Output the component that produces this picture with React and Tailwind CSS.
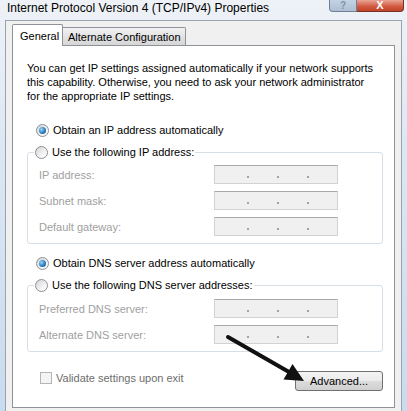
import React from "react";

const Radio = ({ checked }) => (
  <span className="inline-flex w-[13px] h-[13px] shrink-0 items-center justify-center rounded-full border border-[#8c8f94] bg-[linear-gradient(135deg,#d4d4d4,#f7f7f7_70%,#ffffff)]">
    {checked && (
      <span className="w-[7px] h-[7px] rounded-full bg-[radial-gradient(circle_at_35%_35%,#9ad6f7,#2a7fc0_55%,#0f3e70)]" />
    )}
  </span>
);

const IpBox = () => (
  <div className="w-[124px] h-[19px] border border-[#d2d2d2] border-t-[#a8a8a8] bg-[#f0f0f0] flex items-end pb-[5px] pl-[32px] gap-[28px]">
    <span className="w-[2px] h-[2px] bg-[#a3a3a3]" />
    <span className="w-[2px] h-[2px] bg-[#a3a3a3]" />
    <span className="w-[2px] h-[2px] bg-[#a3a3a3]" />
  </div>
);

const Field = ({ label }) => (
  <div className="flex items-center h-[19px]">
    <span className="w-[175px] text-[#a0a0a0]">{label}</span>
    <IpBox />
  </div>
);

const Group = ({ legend, children, pt }) => (
  <fieldset className={`mt-[6px] rounded-[3px] border border-[#d5dfe5] pl-[11px] pb-[7px] ${pt}`}>
    <legend className="-ml-[5px] px-[1px] flex items-center gap-[4px] h-[16px] text-black">
      <Radio />
      <span>{legend}</span>
    </legend>
    <div className="flex flex-col gap-[7px]">{children}</div>
  </fieldset>
);

export default function App() {
  return (
    <div className="relative w-[407px] h-[411px] overflow-hidden whitespace-nowrap bg-[linear-gradient(180deg,#eef2f7,#dbe6f3_40%,#c9dbef)] font-['Liberation_Sans',Arial,sans-serif] text-[11px] leading-[14px] text-black">
      {/* Title bar */}
      <div className="h-[20px] flex items-start justify-between">
        <span className="pl-[7px] pt-[1px] text-[12px] leading-[15px] text-black">
          Internet Protocol Version 4 (TCP/IPv4) Properties
        </span>
        <div className="flex mr-[3px]">
          <div className="w-[28px] h-[12px] border border-t-0 border-[#6f7f95] rounded-bl-[4px] bg-[linear-gradient(180deg,#c4d3e4,#aebfd4)] flex items-center justify-center">
            <span className="text-[10px] leading-[11px] font-bold text-[#8193a8]">?</span>
          </div>
          <div className="w-[47px] h-[12px] border border-t-0 border-l-0 border-[#7c2f22] rounded-br-[4px] bg-[linear-gradient(180deg,#e9a493,#d0583f_60%,#c04428)] flex items-center justify-center">
            <span className="text-[11px] leading-[11px] font-bold text-white">X</span>
          </div>
        </div>
      </div>

      {/* Dialog body */}
      <div className="ml-[5px] mr-[5px] h-[391px] border-l border-t border-r border-[#9aa3ad] bg-[#f0f0f0] pl-[6px] pr-[6px] pt-[3px]">
        {/* Tabs */}
        <div className="flex items-end h-[21px]">
          <div className="relative z-10 w-[51px] h-[22px] -mb-px bg-white border border-b-0 border-[#8e9299] rounded-t-[2px] pl-[7px] pt-[4px]">
            General
          </div>
          <div className="w-[123px] h-[18px] border border-l-0 border-b-0 border-[#8e9299] rounded-tr-[2px] bg-[linear-gradient(180deg,#f2f2f2,#e3e3e3_50%,#d6d6d6)] pl-[5px] pt-[2px]">
            Alternate Configuration
          </div>
        </div>

        {/* Panel */}
        <div className="h-[363px] bg-white border border-[#8e9299] pl-[14px] pr-[11px] pt-[15px]">
          <p>
            You can get IP settings assigned automatically if your network supports
            <br />
            this capability. Otherwise, you need to ask your network administrator
            <br />
            for the appropriate IP settings.
          </p>

          <div className="mt-[19px] ml-[9px] flex items-center gap-[4px] h-[16px]">
            <Radio checked />
            <span>Obtain an IP address automatically</span>
          </div>

          <Group legend="Use the following IP address:" pt="pt-[5px]">
            <Field label="IP address:" />
            <Field label="Subnet mask:" />
            <Field label="Default gateway:" />
          </Group>

          <div className="mt-[11px] ml-[9px] flex items-center gap-[4px] h-[16px]">
            <Radio checked />
            <span>Obtain DNS server address automatically</span>
          </div>

          <Group legend="Use the following DNS server addresses:" pt="pt-[6px]">
            <Field label="Preferred DNS server:" />
            <Field label="Alternate DNS server:" />
          </Group>

          <div className="mt-[19px] flex items-start justify-between">
            <div className="ml-[13px] flex items-center gap-[4px] h-[13px]">
              <span className="w-[12px] h-[12px] border border-[#b5b5b5] bg-[#f4f4f4]" />
              <span className="text-[#6d6d6d]">Validate settings upon exit</span>
            </div>
            <button className="w-[88px] h-[20px] rounded-[3px] border border-[#707070] bg-[linear-gradient(180deg,#f3f3f3,#ebebeb_50%,#dddddd_50%,#cfcfcf)] text-black text-[11px] leading-[14px]">
              Advanced...
            </button>
          </div>
        </div>
      </div>

      {/* Annotation arrow */}
      <svg className="absolute inset-0 pointer-events-none" width="407" height="411" viewBox="0 0 407 411">
        <line x1="228" y1="337" x2="289" y2="372" stroke="#111" strokeWidth="4" strokeLinecap="round" />
        <polygon points="304,381 283.5,379.5 292.5,364" fill="#111" />
      </svg>
    </div>
  );
}
